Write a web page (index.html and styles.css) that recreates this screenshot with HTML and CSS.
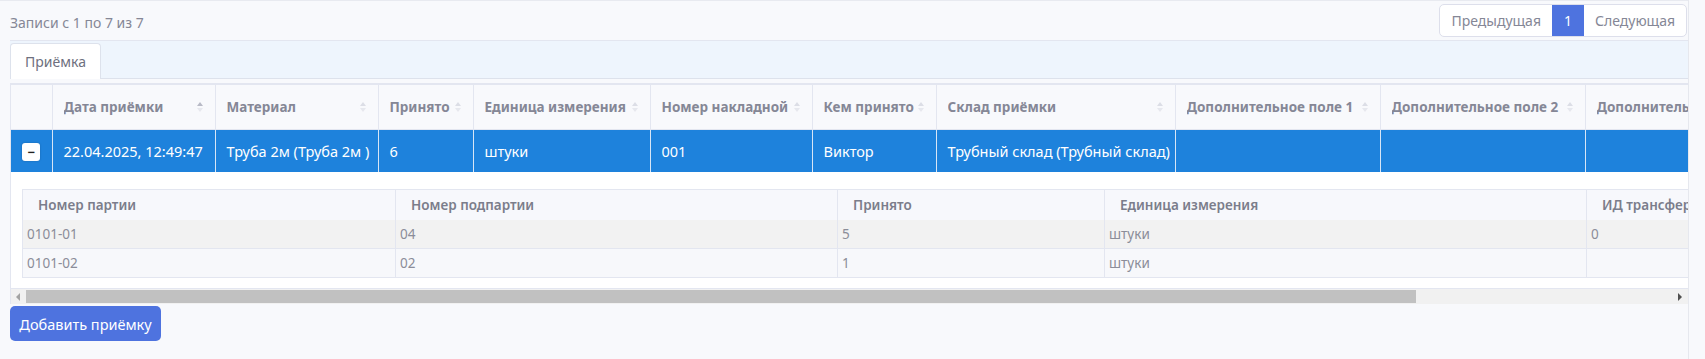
FILE: index.html
```html
<!DOCTYPE html>
<html lang="ru">
<head>
<meta charset="utf-8">
<link rel="stylesheet" href="styles.css">
</head>
<body>
<div class="page">
  <div class="topline"></div>
  <div class="toolbar">
    <div class="info">Записи с 1 по 7 из 7</div>
    <div class="pager">
      <span class="pg">Предыдущая</span>
      <span class="pg active">1</span>
      <span class="pg">Следующая</span>
    </div>
  </div>
  <div class="tabs">
    <div class="tab">Приёмка</div>
  </div>
  <div class="tablewrap">
    <div class="scroller">
      <table class="main">
        <colgroup>
          <col style="width:41px"><col style="width:163px"><col style="width:163px"><col style="width:95px"><col style="width:177px"><col style="width:162px"><col style="width:124px"><col style="width:239px"><col style="width:205px"><col style="width:205px"><col style="width:205px">
        </colgroup>
        <thead>
          <tr>
            <th></th>
            <th><div class="hc"><span>Дата приёмки</span><span class="sort asc"><i class="up"></i><i class="dn"></i></span></div></th>
            <th><div class="hc"><span>Материал</span><span class="sort"><i class="up"></i><i class="dn"></i></span></div></th>
            <th><div class="hc"><span>Принято</span><span class="sort"><i class="up"></i><i class="dn"></i></span></div></th>
            <th><div class="hc"><span>Единица измерения</span><span class="sort"><i class="up"></i><i class="dn"></i></span></div></th>
            <th><div class="hc"><span>Номер накладной</span><span class="sort"><i class="up"></i><i class="dn"></i></span></div></th>
            <th><div class="hc"><span>Кем принято</span><span class="sort"><i class="up"></i><i class="dn"></i></span></div></th>
            <th><div class="hc"><span>Склад приёмки</span><span class="sort"><i class="up"></i><i class="dn"></i></span></div></th>
            <th><div class="hc"><span>Дополнительное поле 1</span><span class="sort"><i class="up"></i><i class="dn"></i></span></div></th>
            <th><div class="hc"><span>Дополнительное поле 2</span><span class="sort"><i class="up"></i><i class="dn"></i></span></div></th>
            <th><div class="hc"><span>Дополнительное поле 3</span><span class="sort"><i class="up"></i><i class="dn"></i></span></div></th>
          </tr>
        </thead>
        <tbody>
          <tr class="sel">
            <td class="ctl"><span class="minus">−</span></td>
            <td>22.04.2025, 12:49:47</td>
            <td>Труба 2м (Труба 2м )</td>
            <td>6</td>
            <td>штуки</td>
            <td>001</td>
            <td>Виктор</td>
            <td>Трубный склад (Трубный склад)</td>
            <td></td>
            <td></td>
            <td></td>
          </tr>
          <tr class="detail">
            <td colspan="11">
              <table class="sub">
                <colgroup>
                  <col style="width:373px"><col style="width:442px"><col style="width:267px"><col style="width:482px"><col style="width:200px">
                </colgroup>
                <thead>
                  <tr><th>Номер партии</th><th>Номер подпартии</th><th>Принято</th><th>Единица измерения</th><th>ИД трансфера</th></tr>
                </thead>
                <tbody>
                  <tr class="odd"><td>0101-01</td><td>04</td><td>5</td><td>штуки</td><td>0</td></tr>
                  <tr class="even"><td>0101-02</td><td>02</td><td>1</td><td>штуки</td><td></td></tr>
                </tbody>
              </table>
            </td>
          </tr>
        </tbody>
      </table>
    </div>
    <div class="hscroll">
      <span class="arr left"></span>
      <div class="track"><div class="thumb"></div></div>
      <span class="arr right"></span>
    </div>
  </div>
  <button class="btn">Добавить приёмку</button>
</div>
</body>
</html>
```

FILE: styles.css
```css
html, body {
  margin: 0;
  padding: 0;
  background: #f8f9fc;
  font-family: "Noto Sans", "Open Sans", sans-serif;
  color: #858796;
}
.page {
  width: 1678px;
  padding-left: 10px;
  height: 359px;
  border-right: 1px solid #e6e8ee;
  box-sizing: content-box;
}
.topline {
  height: 1px;
  margin-left: -10px;
  background: #e8eaf0;
}
.toolbar {
  height: 39px;
  display: flex;
  justify-content: space-between;
  align-items: flex-start;
}
.info {
  font-size: 14px;
  margin-top: 12px;
  color: #858796;
}
.pager {
  display: flex;
  margin-top: 3px;
  height: 31px;
  border: 1px solid #dddfeb;
  border-radius: 5px;
  background: #fff;
  overflow: hidden;
  margin-right: 1px;
}
.pg {
  display: flex;
  align-items: center;
  padding: 0 11px;
  font-size: 14px;
  color: #858796;
}
.pg.active {
  background: #4e73df;
  color: #fff;
  padding: 0 12px;
}
.tabs {
  height: 37px;
  background: #eef5fd;
  border-top: 1px solid #e3e6f0;
  border-bottom: 1px solid #dde2ec;
  display: flex;
  align-items: flex-end;
}
.tab {
  width: 91px;
  height: 36px;
  margin-bottom: -1px;
  background: #fff;
  border: 1px solid #dde2ec;
  border-bottom: none;
  border-radius: 4px 4px 0 0;
  box-sizing: border-box;
  display: flex;
  align-items: center;
  justify-content: center;
  font-size: 14px;
  color: #6e707e;
}
.tablewrap {
  margin-top: 4px;
  border-left: 1px solid #e3e6f0;
}
.scroller {
  overflow: hidden;
  width: 1677px;
}
table.main {
  border-collapse: collapse;
  table-layout: fixed;
  width: 1779px;
}
table.main > thead th {
  height: 45px;
  border-top: 2px solid #e3e6f0;
  border-bottom: 1px solid #e3e6f0;
  border-left: 1px solid #e3e6f0;
  background: #f8f9fc;
  text-align: left;
  padding: 0 12px 0 11px;
  font-size: 13.5px;
  font-weight: 700;
  color: #858796;
  white-space: nowrap;
  box-sizing: border-box;
}
table.main > thead th:first-child { border-left: none; }
.hc {
  display: flex;
  align-items: center;
  justify-content: space-between;
  overflow: hidden;
}
.sort {
  display: inline-flex;
  flex-direction: column;
  gap: 2px;
  margin-left: 4px;
  flex: none;
}
.sort i {
  display: block;
  width: 0;
  height: 0;
  border-left: 3px solid transparent;
  border-right: 3px solid transparent;
}
.sort .up { border-bottom: 4px solid #dcdee6; }
.sort .dn { border-top: 4px solid #e6e8ee; }
.sort.asc .up { border-bottom-color: #b8bac6; }
tr.sel td {
  height: 43px;
  background: #1e82dc;
  color: #fff;
  font-size: 14.5px;
  padding: 0 11px;
  border-left: 1px solid #d8e6f6;
  white-space: nowrap;
  box-sizing: border-box;
}
tr.sel td:first-child { border-left: none; }
td.ctl { text-align: center; }
.minus {
  display: inline-flex;
  width: 18px;
  height: 18px;
  background: #fff;
  border-radius: 3px;
  color: #222;
  font-size: 13px;
  line-height: 1;
  align-items: center;
  justify-content: center;
  font-weight: 700;
  box-shadow: 0 0 2px rgba(0,0,0,0.25);
}
tr.detail td {
  background: #fff;
  padding: 17px 0 10px 11px;
  border-bottom: 1px solid #e3e6f0;
}
table.sub {
  border-collapse: collapse;
  table-layout: fixed;
  width: 1764px;
  border: 1px solid #e3e6f0;
}
table.sub th {
  height: 30px;
  background: #f7f8fc;
  text-align: left;
  font-weight: 600;
  font-size: 13.5px;
  color: #7b7d8b;
  padding: 0 15px;
  border-left: 1px solid #e3e6f0;
  box-sizing: border-box;
}
table.sub td {
  height: 29px;
  font-size: 13.5px;
  color: #8b8d99;
  padding: 0 4px;
  border-left: 1px solid #e3e6f0;
  border-top: 1px solid #e3e6f0;
  box-sizing: border-box;
}
table.sub tr.odd td { background: #f2f2f2; border-top: none; }
table.sub tr.even td { background: #f7f8fb; }
.hscroll {
  height: 15px;
  margin-top: 0;
  background: #f1f1f1;
  display: flex;
  align-items: center;
  width: 1677px;
}
.arr {
  width: 0;
  height: 0;
  border-top: 4px solid transparent;
  border-bottom: 4px solid transparent;
  flex: none;
}
.arr.left { border-right: 4px solid #a3a3a3; margin: 0 6px 0 5px; }
.arr.right { border-left: 4px solid #505050; margin: 0 6px 0 6px; }
.track {
  flex: 1;
  height: 13px;
}
.thumb {
  width: 1390px;
  height: 13px;
  background: #c1c1c1;
}
.btn {
  margin-top: 2px;
  width: 151px;
  height: 35px;
  border: none;
  border-radius: 5px;
  background: #4e73df;
  color: #fff;
  font-family: "Noto Sans", "Open Sans", sans-serif;
  font-size: 14.5px;
  padding: 0;
}
```
